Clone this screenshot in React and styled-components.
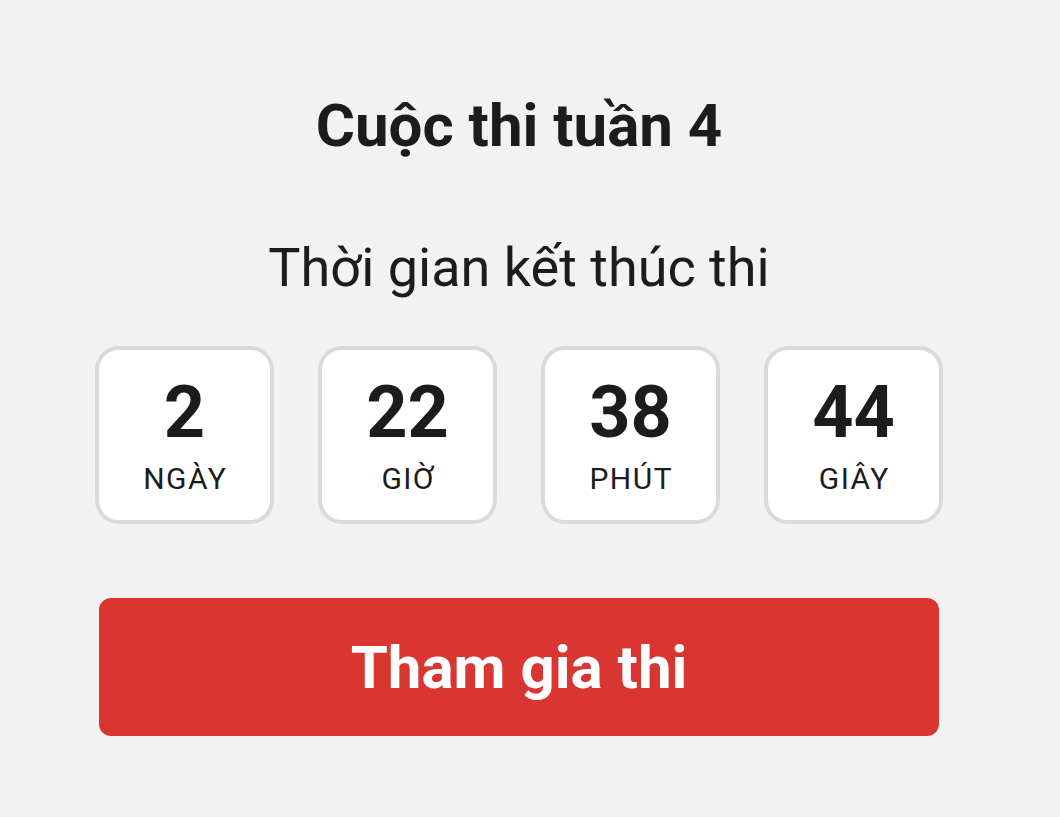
import styled, { createGlobalStyle } from "styled-components";

const GlobalStyle = createGlobalStyle`
  html, body {
    margin: 0;
    padding: 0;
    background: #f2f2f2;
  }
  body {
    font-family: Roboto, "Noto Sans", sans-serif;
    color: #1c1c1c;
  }
`;

const Page = styled.div`
  width: 1038px;
  min-height: 817px;
  display: flex;
  flex-direction: column;
  align-items: center;
  padding-top: 90px;
  box-sizing: border-box;
`;

const Title = styled.h1`
  margin: 0;
  font-size: 60px;
  font-weight: 700;
  line-height: 72px;
`;

const Subtitle = styled.p`
  margin: 70px 0 0;
  font-size: 54px;
  font-weight: 400;
  line-height: 72px;
`;

const Countdown = styled.div`
  margin-top: 42px;
  display: flex;
  gap: 44px;
`;

const TimeBox = styled.div`
  width: 179px;
  height: 178px;
  box-sizing: border-box;
  border: 4px solid #dadada;
  border-radius: 24px;
  background: #fff;
  display: flex;
  flex-direction: column;
  align-items: center;
  padding-top: 23px;
`;

const Value = styled.span`
  font-size: 72px;
  font-weight: 700;
  line-height: 80px;
`;

const Unit = styled.span`
  margin-top: 8px;
  font-size: 30px;
  font-weight: 400;
  line-height: 36px;
  letter-spacing: 1.5px;
  padding-left: 1.5px;
`;

const JoinButton = styled.button`
  margin-top: 74px;
  width: 840px;
  height: 138px;
  border: none;
  border-radius: 12px;
  background: #d93632;
  color: #fff;
  font-family: inherit;
  font-size: 60px;
  font-weight: 700;
  cursor: pointer;
`;

const remaining = [
  { value: 2, unit: "NGÀY" },
  { value: 22, unit: "GIỜ" },
  { value: 38, unit: "PHÚT" },
  { value: 44, unit: "GIÂY" },
];

const App = () => {
  return (
    <>
      <GlobalStyle />
      <Page>
        <Title>Cuộc thi tuần 4</Title>
        <Subtitle>Thời gian kết thúc thi</Subtitle>
        <Countdown>
          {remaining.map((item) => (
            <TimeBox key={item.unit}>
              <Value>{item.value}</Value>
              <Unit>{item.unit}</Unit>
            </TimeBox>
          ))}
        </Countdown>
        <JoinButton>Tham gia thi</JoinButton>
      </Page>
    </>
  );
};

export default App;
